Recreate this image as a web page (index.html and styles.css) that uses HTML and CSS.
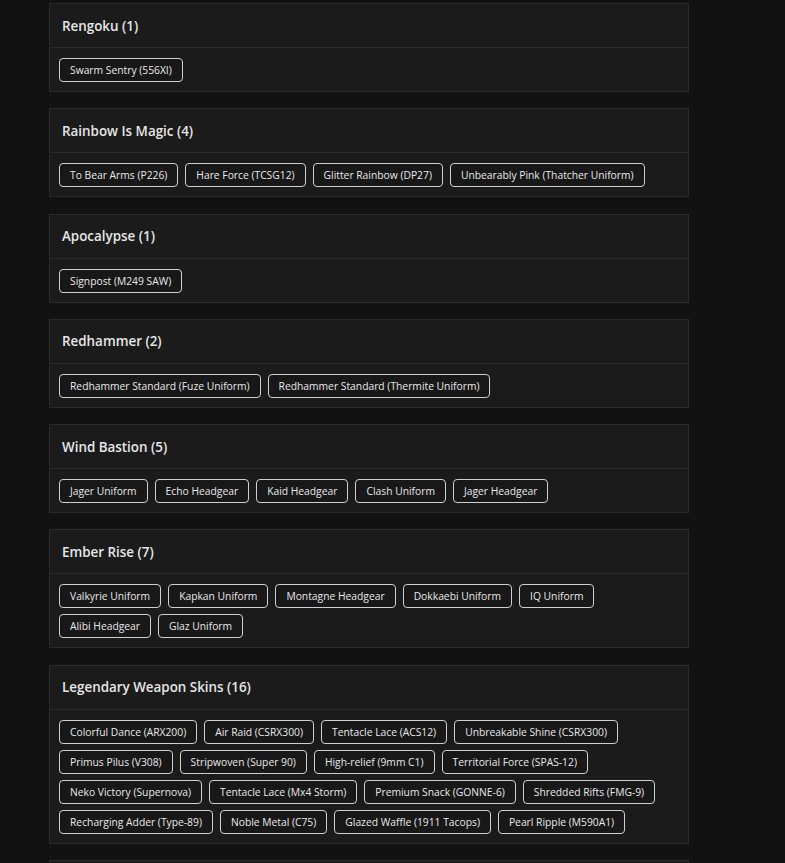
FILE: index.html
```html
<!DOCTYPE html>
<html lang="en">

<head>
  <meta charset="UTF-8">
  <title>Bundles</title>
  <link rel="stylesheet" href="styles.css">
</head>

<body>
  <div class="bundles">
    <div class="bundle">
      <div class="bundle-title">Rengoku (1)</div>
      <div class="items">
        <span class="item">Swarm Sentry (556XI)</span>
      </div>
    </div>

    <div class="bundle">
      <div class="bundle-title">Rainbow Is Magic (4)</div>
      <div class="items">
        <span class="item">To Bear Arms (P226)</span>
        <span class="item">Hare Force (TCSG12)</span>
        <span class="item">Glitter Rainbow (DP27)</span>
        <span class="item">Unbearably Pink (Thatcher Uniform)</span>
      </div>
    </div>

    <div class="bundle">
      <div class="bundle-title">Apocalypse (1)</div>
      <div class="items">
        <span class="item">Signpost (M249 SAW)</span>
      </div>
    </div>

    <div class="bundle">
      <div class="bundle-title">Redhammer (2)</div>
      <div class="items">
        <span class="item">Redhammer Standard (Fuze Uniform)</span>
        <span class="item">Redhammer Standard (Thermite Uniform)</span>
      </div>
    </div>

    <div class="bundle">
      <div class="bundle-title">Wind Bastion (5)</div>
      <div class="items">
        <span class="item">Jager Uniform</span>
        <span class="item">Echo Headgear</span>
        <span class="item">Kaid Headgear</span>
        <span class="item">Clash Uniform</span>
        <span class="item">Jager Headgear</span>
      </div>
    </div>

    <div class="bundle">
      <div class="bundle-title">Ember Rise (7)</div>
      <div class="items">
        <span class="item">Valkyrie Uniform</span>
        <span class="item">Kapkan Uniform</span>
        <span class="item">Montagne Headgear</span>
        <span class="item">Dokkaebi Uniform</span>
        <span class="item">IQ Uniform</span>
        <span class="item">Alibi Headgear</span>
        <span class="item">Glaz Uniform</span>
      </div>
    </div>

    <div class="bundle">
      <div class="bundle-title">Legendary Weapon Skins (16)</div>
      <div class="items">
        <span class="item">Colorful Dance (ARX200)</span>
        <span class="item">Air Raid (CSRX300)</span>
        <span class="item">Tentacle Lace (ACS12)</span>
        <span class="item">Unbreakable Shine (CSRX300)</span>
        <span class="item">Primus Pilus (V308)</span>
        <span class="item">Stripwoven (Super 90)</span>
        <span class="item">High-relief (9mm C1)</span>
        <span class="item">Territorial Force (SPAS-12)</span>
        <span class="item">Neko Victory (Supernova)</span>
        <span class="item">Tentacle Lace (Mx4 Storm)</span>
        <span class="item">Premium Snack (GONNE-6)</span>
        <span class="item">Shredded Rifts (FMG-9)</span>
        <span class="item">Recharging Adder (Type-89)</span>
        <span class="item">Noble Metal (C75)</span>
        <span class="item">Glazed Waffle (1911 Tacops)</span>
        <span class="item">Pearl Ripple (M590A1)</span>
      </div>
    </div>

    <!-- next bundle, only its top edge is in view -->
    <div class="bundle bundle-next"></div>
  </div>
</body>

</html>
```

FILE: styles.css
```css
html,
body {
  margin: 0;
  padding: 0;
  background: #121212;
  font-family: "Open Sans", "Liberation Sans", sans-serif;
  color: #e4e4e4;
}

.bundles {
  width: 640px;
  margin-left: 49px;
  padding-top: 3px;
}

.bundle {
  background: #1b1b1b;
  border: 1px solid #2b2b2b;
  margin-bottom: 16.3px;
}

.bundle-next {
  height: 40px;
}

.bundle-title {
  height: 43px;
  display: flex;
  align-items: center;
  padding-left: 12px;
  border-bottom: 1px solid #2b2b2b;
  font-size: 13.4px;
  font-weight: 600;
  color: #e6e6e6;
}

.items {
  display: flex;
  flex-wrap: wrap;
  gap: 6px 7px;
  padding: 10px 9px 9px 9px;
}

.item {
  display: inline-block;
  height: 22px;
  line-height: 22px;
  padding: 0 10px;
  border: 1px solid #cfcfcf;
  border-radius: 4px;
  background: #181818;
  font-size: 10.3px;
  color: #e8e8e8;
  white-space: nowrap;
}
```
